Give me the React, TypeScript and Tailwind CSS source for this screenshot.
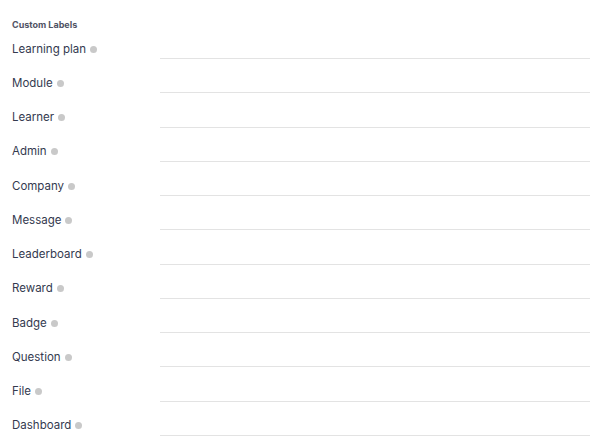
const labels = [
  "Learning plan",
  "Module",
  "Learner",
  "Admin",
  "Company",
  "Message",
  "Leaderboard",
  "Reward",
  "Badge",
  "Question",
  "File",
  "Dashboard",
]

export default function App() {
  return (
    <div className="min-h-screen w-[590px] bg-white pl-3 pt-[19px] font-['Inter',sans-serif]">
      <h3 className="text-[9px] font-bold leading-[12px] text-[#4f5364]">Custom Labels</h3>

      <div className="mt-[8px]">
        {labels.map((label) => (
          <div key={label} className="flex h-[34.27px]">
            <div className="flex h-4 w-[148px] items-center gap-[4px] pt-[3px] text-[11.5px] leading-4 text-[#343a4f]">
              <span>{label}</span>
              <span className="mt-[1px] h-[7px] w-[7px] rounded-full bg-[#c9c9c9]" />
            </div>
            <div className="h-5 flex-1 border-b border-[#e3e3e3]" />
          </div>
        ))}
      </div>
    </div>
  )
}
